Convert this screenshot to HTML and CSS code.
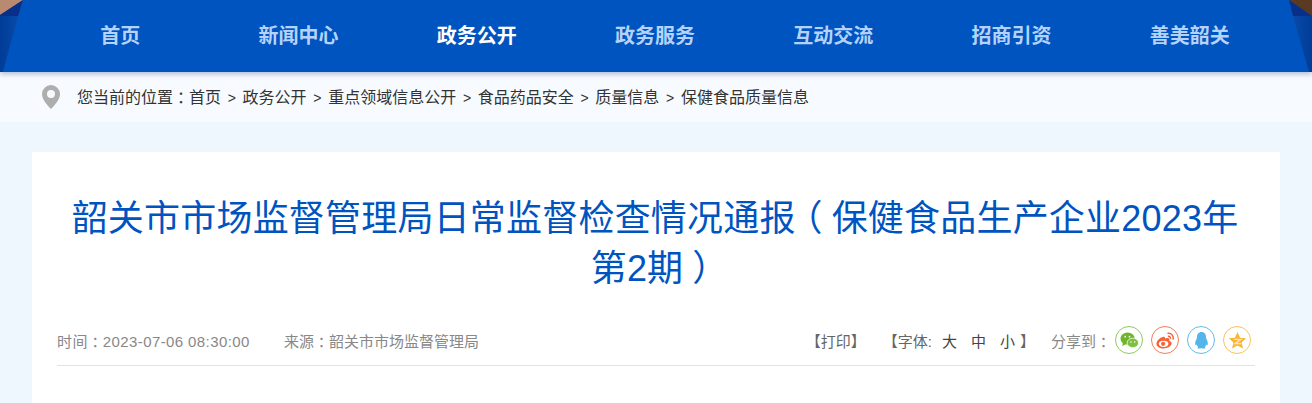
FILE: index.html
```html
<!DOCTYPE html>
<html>

<head>
	<meta charset="utf-8">
	<meta name="viewport" content="width=device-width, initial-scale=1.0">
	<title>韶关市市场监督管理局日常监督检查情况通报</title>
	<link rel="stylesheet" href="styles.css">
</head>

<body>
	<div class="nav">
		<svg class="nav-corner nav-corner-left" viewBox="0 0 32 72">
			<defs>
				<linearGradient id="sideL" x1="0" y1="0" x2="1" y2="0">
					<stop offset="0" stop-color="#003c98" />
					<stop offset="1" stop-color="#0a4aa8" />
				</linearGradient>
				<linearGradient id="sideR" x1="0" y1="0" x2="1" y2="0">
					<stop offset="0" stop-color="#0a4aa8" />
					<stop offset="1" stop-color="#003c98" />
				</linearGradient>
			</defs>
			<polygon points="0,0 23,0 0,15" fill="#b98a70" />
			<polygon points="0,15 23,0 18,16 0,16" fill="#0a2f88" />
			<polygon points="0,16 18,16 3,72 0,72" fill="url(#sideL)" />
		</svg>
		<svg class="nav-corner nav-corner-right" viewBox="0 0 32 72">
			<polygon points="9,0 32,0 32,16" fill="#5a3a20" />
			<polygon points="9,0 32,16 13,16" fill="#0a2f88" />
			<polygon points="13,16 32,16 32,72 29,72" fill="url(#sideR)" />
		</svg>
		<ul class="nav-list">
			<li>首页</li>
			<li>新闻中心</li>
			<li class="active">政务公开</li>
			<li>政务服务</li>
			<li>互动交流</li>
			<li>招商引资</li>
			<li>善美韶关</li>
		</ul>
	</div>

	<div class="crumb">
		<svg class="pin" viewBox="0 0 18 24">
			<path fill-rule="evenodd" fill="#aeaeae" d="M9 0a9 9 0 0 1 9 9c0 5-5 11-9 15C5 20 0 14 0 9a9 9 0 0 1 9-9zm0 5a4 4 0 1 0 0 8 4 4 0 0 0 0-8z" />
		</svg>
		<span class="crumb-text">您当前的位置<span class="pu">：</span>首页<i>&gt;</i>政务公开<i>&gt;</i>重点领域信息公开<i>&gt;</i>食品药品安全<i>&gt;</i>质量信息<i>&gt;</i>保健食品质量信息</span>
	</div>

	<div class="main">
		<div class="card">
			<h1>韶关市市场监督管理局日常监督检查情况通报<span class="pu">（</span>保健食品生产企业2023年<br>第2期<span class="pu">）</span></h1>
			<div class="meta">
				<div class="meta-left">
					<span class="date">时间<span class="pu">：</span>2023-07-06 08:30:00</span>
					<span>来源<span class="pu">：</span>韶关市市场监督管理局</span>
				</div>
				<div class="meta-right">
					<span class="print">【打印】</span>
					<span class="size">【字体:<b>大</b><b>中</b><b>小</b>】</span>
					<span class="share">分享到<span class="pu">：</span></span>
					<span class="icon icon-wx">
						<svg viewBox="0 0 20 20">
							<ellipse cx="8" cy="8" rx="7.500" ry="6.500" fill="#6fb52c" />
							<path fill="#6fb52c" d="M3 12l-.5 4 4-2.500z" />
							<ellipse cx="13.500" cy="12.500" rx="6" ry="5" fill="#7cc040" stroke="#fff" stroke-width=".8" />
							<circle cx="5.500" cy="6" r=".9" fill="#fff" />
							<circle cx="10" cy="6" r=".9" fill="#fff" />
							<circle cx="11.500" cy="11.500" r=".8" fill="#fff" />
							<circle cx="15.500" cy="11.500" r=".8" fill="#fff" />
						</svg>
					</span>
					<span class="icon icon-wb">
						<svg viewBox="0 0 20 20">
							<path fill="#f4633a" d="M8.500 6c-4 .3-8 4-8 7.500 0 3 3.500 5 7.500 5s8.500-2.500 8.500-5.500c0-1.700-1.500-2.300-2.500-2.600.5-1.500.2-3-2-3-1 0-2 .4-2.500.6.100-1.500-.5-2.100-1-2z" />
							<ellipse cx="8" cy="13.500" rx="5" ry="3.300" fill="#fff" />
							<circle cx="7.500" cy="13.500" r="2.200" fill="#f4633a" />
							<path fill="none" stroke="#f4633a" stroke-width="1.500" d="M12 2.500c3.800-.8 7 2.200 6 6.500M12.500 5.500c1.800-.3 3 1 2.600 2.800" />
						</svg>
					</span>
					<span class="icon icon-qq">
						<svg viewBox="0 0 20 20">
							<path fill="#53b5ea" d="M10 1c3.200 0 4.800 2.500 4.800 5.500 0 1 .2 1.500.7 2.500.8 1.600 1.500 3.500 1 5.500-.4 1-1 .8-1.600-.2-.2 1.300-.6 2-1.400 2.700 1 .4 1.200 1.500-.5 1.500-1.300 0-2.400-.3-3-.6-.6.300-1.700.6-3 .6-1.700 0-1.500-1.100-.5-1.500-.8-.7-1.200-1.400-1.400-2.700-.6 1-1.200 1.200-1.600.2-.5-2 .2-3.900 1-5.500.5-1 .7-1.500.7-2.500C5.200 3.500 6.800 1 10 1z" />
						</svg>
					</span>
					<span class="icon icon-qz">
						<svg viewBox="0 0 20 20">
							<polygon fill="#fbb62e" points="10,1 12.700,7 19,7.700 14.400,12 15.700,18.500 10,15.300 4.300,18.500 5.600,12 1,7.700 7.300,7" />
							<path fill="none" stroke="#fde0e0" stroke-width="1.500" d="M6.500 8.800h7l-6 4.500h6.500" />
						</svg>
					</span>
				</div>
			</div>
		</div>
	</div>
</body>

</html>
```

FILE: styles.css
```css
* {
	margin: 0;
	padding: 0;
	box-sizing: border-box;
	font-family: "Liberation Sans", "Noto Sans CJK SC", sans-serif;
}

body {
	width: 100%;
	height: 100vh;
	background: #eef6fe;
	overflow: hidden;
}

.pu {
	display: inline-block;
	width: 1em;
	text-align: center;
	font-feature-settings: "halt";
}

.nav {
	height: 72px;
	background: #0054c0;
	position: relative;
	z-index: 1;
	box-shadow: 0 2px 5px rgba(40, 60, 120, .35);
}

.nav-corner {
	position: absolute;
	top: 0;
	width: 32px;
	height: 72px;
}

.nav-corner-left {
	left: 0;
}

.nav-corner-right {
	right: 0;
}

.nav-list {
	width: 1248px;
	height: 72px;
	margin-left: 31px;
	display: grid;
	grid-template-columns: repeat(7, 1fr);
	list-style: none;
	position: relative;
}

.nav-list li {
	text-align: center;
	line-height: 72px;
	font-size: 20px;
	font-weight: 700;
	color: #b5d3fa;
}

.nav-list .active {
	color: #fff;
}

.crumb {
	height: 50px;
	background: #f7fbff;
	display: flex;
	align-items: center;
	padding-left: 42px;
}

.pin {
	width: 18px;
	height: 24px;
	margin-right: 17px;
}

.crumb-text {
	font-size: 16px;
	color: #333;
	padding-bottom: 2px;
}

.crumb-text i {
	font-style: normal;
	font-size: 14px;
	margin: 0 6.700px;
}

.main {
	padding: 30px 32px 0;
}

.card {
	background: #fff;
	height: 251px;
	padding: 42px 25px 0;
}

h1 {
	font-size: 36px;
	line-height: 50px;
	font-weight: 400;
	color: #0054c0;
	text-align: center;
	letter-spacing: .2px;
	padding-right: 2px;
}

.meta {
	display: flex;
	justify-content: space-between;
	align-items: center;
	height: 49px;
	margin-top: 23px;
	padding-bottom: 2px;
	border-bottom: 1px solid #e2e2e2;
	font-size: 15px;
	color: #888;
}

.meta-left span.date {
	margin-right: 30px;
	letter-spacing: .4px;
}

.date .pu {
	letter-spacing: 0;
}

.meta-right {
	display: flex;
	align-items: center;
	padding-right: 4px;
}

.print {
	color: #666;
	margin-right: 17px;
}

.size {
	color: #666;
	margin-right: 16px;
}

.size b {
	font-weight: 400;
	color: #444;
	margin-left: 14px;
}

.size b:first-of-type {
	margin-left: 10px;
}

.size b:last-of-type {
	margin-right: 5px;
}

.icon {
	width: 28px;
	height: 28px;
	border-radius: 50%;
	border: 1px solid;
	margin-left: 8px;
	display: flex;
	align-items: center;
	justify-content: center;
}

.icon svg {
	width: 19px;
	height: 19px;
}

.share + .icon {
	margin-left: 4px;
}

.icon-wx {
	border-color: #8fcb60;
}

.icon-wb {
	border-color: #f47b55;
}

.icon-qq {
	border-color: #63bce9;
}

.icon-qz {
	border-color: #fcc25a;
}
```
